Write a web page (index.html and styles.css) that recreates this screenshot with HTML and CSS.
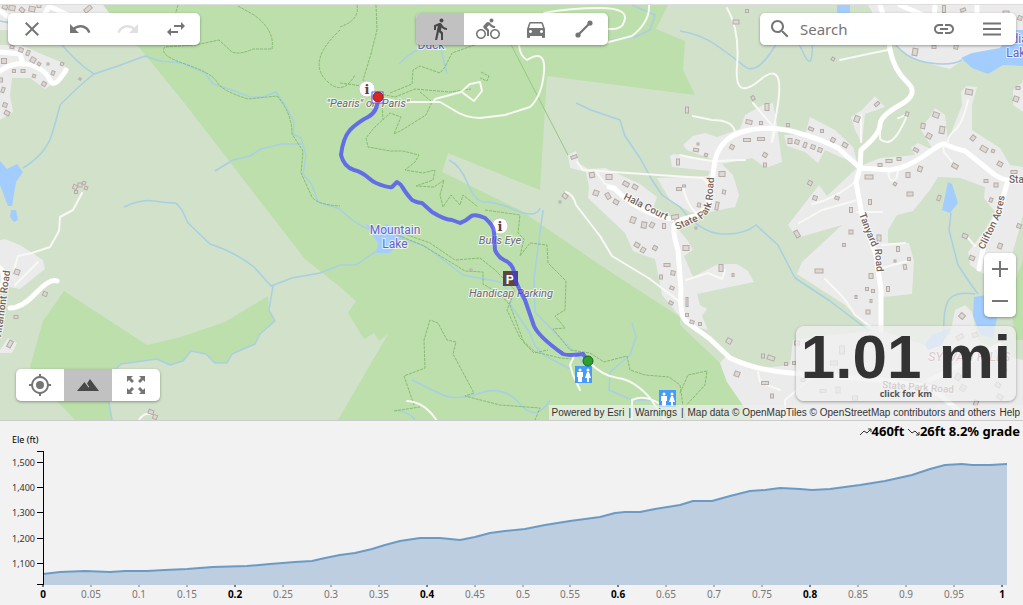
FILE: index.html
```
<!DOCTYPE html>
<html lang="en">
    <head>
        <meta charset="utf-8">
        <title>Route planner</title>
        <link rel="stylesheet" href="styles.css">
    </head>
    <body>
        <main class="map">
            <svg class="map-canvas" viewBox="0 5 1023 415" preserveAspectRatio="xMidYMid slice" aria-label="Route map">
                <rect class="land" y="5" width="1023" height="415"/>

                <!-- parks -->
                <g class="park">
                    <path d="M103 5L147 57 182 100 267 210 305 259 340 287 356 301 348 313 364 339 374 333 379 341 388 334 338 420H753L727 382 720 363 680 325V317L600 265 520 210 442 172 448 153 540 190 547 76 695 95 683 70 685 41 656 29 668 5Z"/>
                    <path d="M64 291L147 345 181 337 225 322 268 296 269 310 275 321 260 334 255 344 232 354 227 363 214 363 206 354 191 351 183 361 170 365 157 359 121 364 105 380 112 420H75L56 400 30 367 43 321Z"/>
                    <path d="M1023 260L1010 295 1015 340H1023ZM860 400L890 420H830Z"/>
                </g>

                <!-- residential areas -->
                <g class="urban">
                    <path d="M0 5H103L113 18 100 30H0Z"/>
                    <path d="M0 45H20L63 63 68 73 45 89 30 78H12L10 95 13 112 0 120Z"/>
                    <path d="M0 240L5 239 20 245 43 260 45 269 20 289 0 285ZM0 350L8 338 17 343 12 353H0Z"/>
                    <path d="M568 155L576 151 579 163 588 169 605 168 640 184 657 197 652 213 672 216 675 225 688 241 693 250 684 256 693 277 718 264 737 264 748 271 754 282 697 294 700 305 707 309 702 316 708 330 688 325 680 317 662 295 655 259 643 255 633 251 625 233 588 198 589 187 586 172 570 168Z"/>
                    <path d="M683 145L693 136 705 133 717 137 740 129 745 115 763 105 773 103 777 125 782 162 766 168 752 158 722 164 733 175 739 195 735 207 700 214 690 212 670 200 657 178 708 176 710 171 672 167 670 156 674 154 714 160 687 150Z"/>
                    <path d="M784 135L805 134 810 117 835 130 853 147 858 165 825 150 818 163 805 152 787 146Z"/>
                    <path d="M851 117L862 110 875 96 885 107 865 114 862 143 855 130Z"/>
                    <path d="M858 167L880 158 915 155 911 148 918 143 933 150 920 128 930 117 935 108 945 115 948 142 953 128 962 105 961 92 966 86 977 87 972 105 972 130 1000 148 1010 165 1023 167V215L1012 255 1005 285 985 275 970 265 968 252 985 230 995 212 984 198 985 187 960 178 938 177 930 190 913 211 897 215 888 230V243H909L914 261 912 294 883 297 882 330H870L845 305 797 274 802 262 842 225 797 238 788 225 819 185 827 196Z"/>
                    <path d="M727 355L765 368 790 365 793 340 815 337 880 330 925 345 950 335 955 310 965 305 972 312 978 340 1000 355 1023 360V420H753L727 382 720 363Z"/>
                    <path d="M868 5H1023V45L970 55 950 69 915 60 895 45 880 25ZM1013 90L1023 82V112L1013 105Z"/>
                </g>

                <!-- water -->
                <g class="water">
                    <path d="M0 161L7 169 17 164 23 172 16 182 12 206 8 206 0 185ZM11 210H16L18 220 14 222 10 217Z"/>
                    <path d="M365 223Q378 232 386 224L403 230 404 238 390 253H376L378 243 371 233Z"/>
                    <path d="M837 5H850V13H837ZM961 58L972 53 1000 48 1012 30H1023V66L1003 65 988 74 972 68Z"/>
                    <path d="M948 182L952 184 958 203 950 213 942 210ZM974 297L986 295 998 312 993 338 980 335 973 315ZM925 345L932 335 950 328 942 345 928 350Z"/>
                </g>
                <g class="stream">
                    <path d="M62 45Q78 64 94 74M23 168Q46 154 52 134T60 105Q82 83 94 74L118 66 145 56 160 61 182 63 205 73 213 84 232 90 250 97 262 97 276 92 285 105 294 122 293 134 301 138 306 155 303 174 312 185 318 202 340 209"/>
                    <path d="M215 171L233 160 250 156 261 149 281 144H302M124 207Q142 199 154 201T176 203L182 210 188 223 210 244Q235 252 254 267L271 286 292 278 320 273 340 265H356L378 250M273 286L269 310 275 321 260 334 255 344 232 354 227 363H215L206 354 191 351 183 361 170 365 157 359 121 364 105 380 112 420M340 209Q358 228 379 232M398 237L425 246 463 275 500 282 513 295 510 304 530 333 535 346 544 355 570 369M543 210L540 233 534 278 535 312 560 338 575 352 588 370M632 323L636 337 630 355 610 372 609 390 632 400 655 400M412 380Q430 389 443 395T480 393 520 404 550 400M395 410Q410 412 415 420"/>
                    <path d="M399 64Q414 48 428 47M440 45L447 74M632 5L655 15 650 30 635 37 610 40M576 103L591 110 620 120 625 136 640 158 652 180 662 195 680 207M680 31Q700 34 716 45T744 66 773 49 802 50 812 36M896 45Q908 60 930 63T962 60M680 207Q700 233 722 234T756 225L778 245 795 278 830 301 868 330M951 213L949 230 958 265 970 283 978 294M975 294Q950 290 946 306T945 338M449 160Q460 165 468 184T485 202 515 210 540 208M0 21L20 25"/>
                </g>

                <!-- trails -->
                <g class="trail">
                    <path d="M178 5L175 15M238 6L254 15Q275 30 272 49L253 49Q240 55 232 52L219 40 195 45 165 47Q158 55 185 64T217 82 248 99L277 96Q292 113 292 134L303 151 301 173 312 197Q318 205 340 206"/>
                    <path d="M340 30Q308 60 325 79T355 75M357 5Q360 20 340 27M376 5L377 30 371 54 363 80 370 92 395 97 415 89 450 92 471 89M390 93L412 84 413 70 420 66 440 73 445 67 452 53 480 43M481 72L489 76 487 81 480 78M420 92L432 102 426 115 402 130 394 134 401 117 390 113 374 128 366 138 368 147 390 151 403 151 419 155 415 162 405 170 423 173 435 170 433 180 416 186 434 187 444 180 440 195 443 207 451 195 460 205 463 195 478 207"/>
                    <path d="M399 232L430 243 455 260 480 258 495 270 515 290 507 310 520 338 535 352 560 358 572 359M380 228L422 245 452 263 465 271 483 272 483 284 500 294 510 305 524 343 534 353 548 350"/>
                    <path d="M485 210L520 215 518 233 524 239 520 256 530 243 547 245 548 263 566 281 565 310 555 316 565 328 553 329 570 350 590 353 604 362 627 356 630 370 645 375 669 377 680 385"/>
                    <path d="M414 405L404 376 425 368 424 340 430 320 438 323 447 340 456 342 453 354 474 393 465 396 500 405 540 408 535 420M394 411L420 407M370 90L362 86 340 83M382 106L383 120M680 385L685 420M680 393L688 375 707 371 705 385 682 410"/>
                </g>
                <path class="powerline" d="M505 33L568 155"/>

                <!-- minor roads -->
                <g class="road">
                    <path d="M386 99L400 102 440 102 452 109Q465 118 480 118L505 115 530 107Q542 96 544 72T527 60Q520 56 519 45M434 101L435 99 461 92 470 84 480 82 482 91 474 101 463 93M544 13Q570 8 600 8T624 22Q622 30 608 29M649 5Q650 22 632 36L605 43"/>
                    <path d="M727 8Q740 30 737 66T760 80 777 110 775 130M753 103L775 129M840 60L868 54 888 50M693 116L712 120Q734 120 735 133M680 155Q710 162 721 161T745 160M577 162L583 170 703 178 708 184M595 170L605 184 616 187M566 192Q573 194 576 205L600 236 612 256 650 279 680 302M683 187Q686 203 696 213"/>
                    <path d="M943 145L944 152 952 162M858 180Q833 200 812 204M857 200L822 210 799 223M888 171Q889 181 893 181T898 170M861 115V142M825 279L840 294Q846 300 855 315L870 326M882 268L908 261M857 212L882 212M686 280L708 273 722 279 725 270M882 245L905 243M815 335V375L785 400V420M758 372L760 382 780 390M880 127L880 139Q890 148 900 130T905 115 898 118M968 100Q963 123 955 130T948 142M968 238L975 246"/>
                    <path d="M73 210L60 217 59 231 50 247 32 253 18 256 14 270M38 262L15 285M73 210L82 193M139 420Q145 410 155 416M407 401Q425 402 437 421M588 361Q602 376 618 378T650 398L665 420M574 356L570 365 573 375 580 390M632 420V400Q645 394 660 404"/>
                </g>

                <!-- main roads -->
                <g class="road road-main">
                    <path d="M0 11L15 22M0 52L20 54 23 64M0 71Q16 60 31 65T50 80 66 70M50 5L40 22M53 8Q75 18 90 26M0 268Q8 277 0 290M10 308Q22 308 36 293T57 281"/>
                    <path d="M609 187L615 189Q640 214 672 219M880 5L888 30 890 50Q894 70 907 82T900 105 880 125 861 150L860 168M675 225L680 220 695 216 707 208 711 190 715 160Q721 137 745 131T795 132 838 148L860 168 890 170Q907 168 925 155T945 144 965 151L995 175Q1003 180 1008 180L1023 181M1008 180L1000 210 985 240 979 269M860 168L856 182 862 215 876 255 881 290V330"/>
                    <path d="M674 225Q673 235 678 250L681 290Q679 317 688 323L710 339 730 358Q755 370 790 373L880 380 930 387 970 420M935 5L934 20 900 5M977 5V20M930 380L1000 345"/>
                </g>

                <g id="buildings"></g>

                <!-- labels -->
                <text class="label label-water" x="395" y="234">Mountain</text>
                <text class="label label-water" x="395" y="248">Lake</text>
                <text class="label label-water" x="431" y="49">Duck</text>
                <text class="label label-water" x="1018" y="43">Indian</text>
                <text class="label label-water" x="1019" y="57">Lake</text>
                <text class="label label-poi" x="368" y="107">"Pearis" or "Paris"</text>
                <text class="label label-poi" x="500" y="244">Bulls Eye</text>
                <text class="label label-poi" x="511" y="297">Handicap Parking</text>
                <path id="hala" class="guide" d="M623 199L668 221"/>
                <path id="statepark" class="guide" d="M677 230L700 220Q713 213 713 192L715 165"/>
                <path id="tanyard" class="guide" d="M859 214Q869 242 875 252L878 290"/>
                <path id="clifton" class="guide" d="M984 250L1001 215 1008 180"/>
                <path id="altamont" class="guide" d="M1 337L10 272"/>
                <g class="label label-road">
                    <text><textPath href="#hala">Hala Court</textPath></text>
                    <text><textPath href="#statepark">State Park Road</textPath></text>
                    <text><textPath href="#tanyard">Tanyard Road</textPath></text>
                    <text><textPath href="#clifton">Clifton Acres</textPath></text>
                    <text><textPath href="#altamont">Altamont Road</textPath></text>
                    <text x="1009" y="183">State</text>
                    <text x="882" y="388" transform="rotate(4 882 388)">State Park Road</text>
                </g>
                <text class="label label-place" x="928" y="361">SYLVAN HILLS</text>

                <!-- points of interest -->
                <g class="poi-info">
                    <circle cx="367" cy="89" r="8"/>
                    <text x="367" y="94">i</text>
                    <circle cx="500" cy="226" r="8"/>
                    <text x="500" y="231">i</text>
                </g>
                <g class="poi-parking">
                    <rect x="503" y="271" width="15" height="15"/>
                    <text x="510" y="284">P</text>
                </g>
                <g class="poi-restroom">
                    <g id="restroom">
                        <rect x="575" y="366" width="17" height="17"/>
                        <path d="M577 372H583V377H582V382H578V377H577ZM587 372H589L591 378H589V382H587V378H585Z"/>
                        <circle cx="580" cy="370" r="1.5"/>
                        <circle cx="588" cy="370" r="1.5"/>
                    </g>
                    <use href="#restroom" x="84" y="24"/>
                </g>

                <!-- route -->
                <path class="route" d="M378 97Q378 112 368 117T350 130Q343 138 341 155 344 167 354 170C367 173 368 180 376 183Q388 188 392 187L397 182Q401 184 403 188T412 200Q418 203 422 203L432 212Q445 220 452 220L460 223Q466 221 470 217T485 218Q494 226 494 232L495 250Q498 257 504 260 514 264 515 277 516 284 525 300L534 326Q539 337 563 354 568 356 583 354L588 361"/>
                <rect class="snap" x="372" y="92" width="11" height="11"/>
                <circle class="end" cx="378" cy="97" r="5"/>
                <circle class="start" cx="588" cy="361" r="5"/>
            </svg>

            <div class="overlay">
                <div class="topbar">
                    <div class="toolbar">
                        <button type="button" aria-label="Clear">
                            <svg class="icon" viewBox="0 0 24 24"><path d="M19 6.4L17.6 5 12 10.6 6.4 5 5 6.4 10.6 12 5 17.6 6.4 19 12 13.4 17.6 19 19 17.6 13.4 12z"/></svg>
                        </button>
                        <button type="button" aria-label="Undo">
                            <svg class="icon" viewBox="0 0 24 24"><path d="M12.5 8c-2.65 0-5.05.99-6.9 2.6L2 7v9h9l-3.62-3.62c1.39-1.16 3.16-1.88 5.12-1.88 3.54 0 6.55 2.31 7.6 5.5l2.37-.78C21.08 11.03 17.15 8 12.5 8z"/></svg>
                        </button>
                        <button type="button" aria-label="Redo" disabled>
                            <svg class="icon" viewBox="0 0 24 24"><path d="M18.4 10.6C16.55 8.99 14.15 8 11.5 8c-4.65 0-8.58 3.03-9.96 7.22L3.9 16c1.05-3.19 4.05-5.5 7.6-5.5 1.95 0 3.73.72 5.12 1.88L13 16h9V7l-3.6 3.6z"/></svg>
                        </button>
                        <button type="button" aria-label="Reverse route">
                            <svg class="icon" viewBox="0 0 24 24"><path d="M6.99 11L3 15l3.99 4v-3H14v-2H6.99v-3zM21 9l-3.99-4v3H10v2h7.01v3L21 9z"/></svg>
                        </button>
                    </div>

                    <div class="toolbar">
                        <button type="button" class="active" aria-label="Walk">
                            <svg class="icon" viewBox="0 0 24 24"><path d="M13.5 5.5c1.1 0 2-.9 2-2s-.9-2-2-2-2 .9-2 2 .9 2 2 2zM9.8 8.9L7 23h2.1l1.8-8 2.1 2v6h2v-7.5l-2.1-2 .6-3C14.8 12 16.8 13 19 13v-2c-1.9 0-3.5-1-4.3-2.4l-1-1.6c-.4-.6-1-1-1.7-1-.3 0-.5.1-.8.1L6 8.3V13h2V9.6l1.8-.7"/></svg>
                        </button>
                        <button type="button" aria-label="Bike">
                            <svg class="icon" viewBox="0 0 24 24"><path d="M15.5 5.5c1.1 0 2-.9 2-2s-.9-2-2-2-2 .9-2 2 .9 2 2 2zM5 12c-2.8 0-5 2.2-5 5s2.2 5 5 5 5-2.2 5-5-2.2-5-5-5zm0 8.5c-1.9 0-3.5-1.6-3.5-3.5s1.6-3.5 3.5-3.5 3.5 1.6 3.5 3.5-1.6 3.5-3.5 3.5zm5.8-10l2.4-2.4.8.8c1.3 1.3 3 2.1 5.1 2.1V9c-1.5 0-2.7-.6-3.6-1.5l-1.9-1.9c-.5-.4-1-.6-1.6-.6s-1.1.2-1.4.6L7.8 8.4c-.4.4-.6.9-.6 1.4 0 .6.2 1.1.6 1.4L11 14v5h2v-6.2l-2.2-2.3zM19 12c-2.8 0-5 2.2-5 5s2.2 5 5 5 5-2.2 5-5-2.2-5-5-5zm0 8.5c-1.9 0-3.5-1.6-3.5-3.5s1.6-3.5 3.5-3.5 3.5 1.6 3.5 3.5-1.6 3.5-3.5 3.5z"/></svg>
                        </button>
                        <button type="button" aria-label="Drive">
                            <svg class="icon" viewBox="0 0 24 24"><path d="M18.92 6.01C18.72 5.42 18.16 5 17.5 5h-11c-.66 0-1.21.42-1.42 1.01L3 12v8c0 .55.45 1 1 1h1c.55 0 1-.45 1-1v-1h12v1c0 .55.45 1 1 1h1c.55 0 1-.45 1-1v-8l-2.08-5.99zM6.5 16c-.83 0-1.5-.67-1.5-1.5S5.67 13 6.5 13s1.5.67 1.5 1.5S7.33 16 6.5 16zm11 0c-.83 0-1.5-.67-1.5-1.5s.67-1.5 1.5-1.5 1.5.67 1.5 1.5-.67 1.5-1.5 1.5zM5 11l1.5-4.5h11L19 11H5z"/></svg>
                        </button>
                        <button type="button" aria-label="Straight line">
                            <svg class="icon" viewBox="0 0 24 24"><circle cx="6" cy="18" r="2.6"/><circle cx="18" cy="6" r="2.6"/><path d="M5.2 17.2l12-12 1.6 1.6-12 12z"/></svg>
                        </button>
                    </div>

                    <form class="search">
                        <button type="submit" aria-label="Search">
                            <svg class="icon" viewBox="0 0 24 24"><path d="M15.5 14h-.79l-.28-.27C15.41 12.59 16 11.11 16 9.5 16 5.91 13.09 3 9.5 3S3 5.91 3 9.5 5.91 16 9.5 16c1.61 0 3.09-.59 4.23-1.57l.27.28v.79l5 4.99L20.49 19l-4.99-5zm-6 0C7.01 14 5 11.99 5 9.5S7.01 5 9.5 5 14 7.01 14 9.5 11.99 14 9.5 14z"/></svg>
                        </button>
                        <input type="text" placeholder="Search" aria-label="Search places">
                        <button type="button" aria-label="Copy link">
                            <svg class="icon" viewBox="0 0 24 24"><path d="M3.9 12c0-1.71 1.39-3.1 3.1-3.1h4V7H7c-2.76 0-5 2.24-5 5s2.24 5 5 5h4v-1.9H7c-1.71 0-3.1-1.39-3.1-3.1zM8 13h8v-2H8v2zm9-6h-4v1.9h4c1.71 0 3.1 1.39 3.1 3.1s-1.39 3.1-3.1 3.1h-4V17h4c2.76 0 5-2.24 5-5s-2.24-5-5-5z"/></svg>
                        </button>
                        <button type="button" aria-label="Menu">
                            <svg class="icon" viewBox="0 0 24 24"><path d="M3 18.5h18v-2H3v2zm0-5.5h18v-2H3v2zm0-7.5v2h18v-2H3z"/></svg>
                        </button>
                    </form>
                </div>

                <div class="bottom">
                    <div class="bottombar">
                        <div class="toolbar">
                            <button type="button" aria-label="My location">
                                <svg class="icon" viewBox="0 0 24 24"><circle cx="12" cy="12" r="4"/><path d="M11 1h2v2.1a9 9 0 0 1 7.9 7.9H23v2h-2.1a9 9 0 0 1-7.9 7.9V23h-2v-2.1A9 9 0 0 1 3.1 13H1v-2h2.1A9 9 0 0 1 11 3.1zM12 5a7 7 0 1 0 0 14 7 7 0 0 0 0-14z"/></svg>
                            </button>
                            <button type="button" class="active" aria-label="Elevation profile">
                                <svg class="icon" viewBox="0 0 24 24"><path d="M1 18L8.5 9l2.500 3.500 1.500 2 .8-.6L11 10.500 14 6l9 12z"/></svg>
                            </button>
                            <button type="button" aria-label="Full screen">
                                <svg class="icon" viewBox="0 0 24 24"><path d="M3 3h6L7 5l3 3-2 2-3-3-2 2zM21 3v6l-2-2-3 3-2-2 3-3-2-2zM3 21v-6l2 2 3-3 2 2-3 3 2 2zM21 21h-6l2-2-3-3 2-2 3 3 2-2z"/></svg>
                            </button>
                        </div>

                        <div class="right">
                            <div class="zoom">
                                <button type="button" aria-label="Zoom in">
                                    <svg class="icon" viewBox="0 0 24 24"><path d="M11 4h2v7h7v2h-7v7h-2v-7H4v-2h7z"/></svg>
                                </button>
                                <button type="button" aria-label="Zoom out">
                                    <svg class="icon" viewBox="0 0 24 24"><path d="M4 11h16v2H4z"/></svg>
                                </button>
                            </div>
                            <button type="button" class="distance">
                                <span class="distance-value">1.01 mi</span>
                                <span class="distance-hint">click for km</span>
                            </button>
                        </div>
                    </div>

                    <div class="attribution">
                        <span>Powered by <a href="#">Esri</a></span>
                        <span>|</span>
                        <a href="#">Warnings</a>
                        <span>|</span>
                        <span>Map data © <a href="#">OpenMapTiles</a> © <a href="#">OpenStreetMap</a> contributors and others</span>
                        <a href="#" class="help">Help</a>
                    </div>
                </div>
            </div>
        </main>

        <section class="elevation">
            <div class="elevation-header">
                <span class="elevation-unit">Ele (ft)</span>
                <div class="stats">
                    <svg class="trend" viewBox="0 0 12 8"><path d="M0 7L4 3 7 5 11 1M8 1H11V4"/></svg>460ft
                    <svg class="trend" viewBox="0 0 12 8"><path d="M0 1L4 5 7 3 11 7M8 7H11V4"/></svg>26ft 8.2% grade
                </div>
            </div>
            <svg class="chart" viewBox="0 0 1023 160" aria-label="Elevation profile">
                <path id="area" class="area"/>
                <path id="line" class="line"/>
                <path class="axis" d="M37 6H43V139H37"/>
                <g id="yticks"></g>
                <g id="xticks"></g>
            </svg>
        </section>

        <script>
            var SVG_NS = 'http://www.w3.org/2000/svg';

            // x, y, width, height, rotation
            var buildings = [
                [5, 7, 5, 4, 20], [12, 8, 6, 5, 10], [22, 10, 5, 4, 40], [32, 9, 6, 5, 10], [39, 6, 4, 3, 0], [88, 9, 8, 4, -40],
                [12, 47, 4, 3, 10], [21, 50, 4, 4, 20], [28, 53, 3, 5, 20], [33, 60, 5, 5, 30], [39, 64, 3, 3, 30], [48, 64, 2, 2, 0],
                [62, 64, 3, 3, 20], [4, 61, 5, 5, 0], [14, 71, 3, 3, 0], [23, 71, 4, 3, 0], [34, 76, 3, 3, 20], [53, 73, 3, 4, 20],
                [44, 84, 4, 4, 30], [1, 80, 3, 4, 0], [3, 90, 3, 5, 20], [5, 105, 4, 4, 20], [7, 113, 5, 4, 30], [80, 79, 2, 2, 30],
                [75, 187, 4, 4, 20], [80, 185, 4, 4, 0], [84, 183, 3, 3, 20], [86, 188, 3, 3, 20], [76, 192, 3, 3, 0],
                [17, 272, 5, 5, 20], [45, 294, 4, 4, 20], [16, 317, 4, 3, 0], [10, 344, 4, 7, 30], [151, 412, 5, 4, 20], [155, 417, 4, 4, 20],
                [574, 157, 6, 3, -20], [592, 175, 5, 5, -10], [609, 177, 6, 5, 0], [626, 184, 6, 4, 30], [635, 187, 5, 4, 30],
                [596, 193, 5, 5, 20], [608, 196, 4, 6, -30], [616, 202, 5, 4, 30], [565, 196, 5, 4, 40], [560, 202, 2, 2, 0],
                [633, 220, 5, 6, 20], [644, 225, 5, 6, 10], [652, 225, 4, 5, 30], [664, 226, 3, 5, 0], [675, 217, 7, 4, -10],
                [637, 245, 5, 4, 30], [643, 250, 4, 5, 30], [655, 248, 4, 4, 30], [667, 265, 6, 3, 0], [673, 273, 4, 4, 10],
                [661, 277, 3, 4, 0], [672, 288, 4, 3, 20], [671, 303, 4, 3, 30], [678, 162, 3, 6, 0], [679, 189, 5, 3, 0], [684, 186, 3, 2, 0],
                [699, 205, 3, 4, 10], [717, 206, 3, 8, 10], [696, 228, 2, 2, 0],
                [687, 110, 3, 6, 0], [753, 98, 3, 4, -30], [767, 107, 4, 7, 0], [749, 122, 6, 4, 10], [761, 123, 3, 3, 0], [788, 125, 3, 3, 0],
                [747, 140, 7, 3, 0], [761, 139, 7, 3, 0], [765, 155, 4, 4, 30], [765, 165, 3, 4, 0], [698, 144, 2, 2, 0], [696, 150, 5, 3, 10],
                [706, 155, 3, 3, 20], [732, 147, 4, 4, 30], [722, 174, 6, 5, 0], [724, 192, 3, 4, 10], [736, 22, 6, 4, 0], [747, 11, 3, 3, 0],
                [811, 129, 5, 3, 20], [822, 131, 3, 3, 0], [833, 140, 4, 4, 30], [845, 145, 5, 4, 30], [790, 141, 4, 5, 0], [797, 142, 4, 4, 20],
                [805, 145, 3, 5, 20], [813, 147, 4, 4, 20], [820, 150, 4, 4, 20], [833, 59, 3, 3, 30], [857, 119, 5, 6, 20], [877, 104, 5, 3, -40],
                [907, 114, 3, 4, 20], [915, 52, 5, 7, 10], [934, 47, 4, 3, 0], [956, 47, 4, 4, 10], [969, 92, 7, 5, 10], [936, 115, 6, 5, 20],
                [923, 126, 4, 5, 10], [929, 136, 5, 5, 30], [942, 130, 5, 7, 10], [916, 150, 5, 3, 30], [973, 138, 4, 5, 40], [984, 149, 7, 5, 30],
                [993, 151, 3, 3, 20], [1000, 164, 5, 4, 30], [1014, 172, 6, 3, 0], [880, 165, 4, 3, 0], [889, 161, 6, 3, 0], [899, 159, 4, 3, 0],
                [869, 177, 8, 4, 0], [895, 184, 3, 3, 30], [908, 175, 4, 5, 0], [920, 169, 4, 5, 20], [910, 194, 6, 4, 0], [955, 166, 6, 4, 30],
                [986, 181, 4, 3, 0], [996, 185, 4, 4, 0], [939, 198, 3, 5, 20], [815, 198, 4, 4, 20], [837, 198, 4, 3, 20], [870, 202, 3, 5, 0],
                [810, 183, 4, 4, 30], [797, 234, 4, 7, -30], [844, 245, 3, 3, 0], [851, 232, 4, 4, 0], [819, 271, 8, 4, 0], [879, 238, 4, 6, 0],
                [851, 210, 3, 5, 0], [991, 200, 3, 4, 20],
                [898, 249, 3, 5, 0], [895, 261, 2, 2, 0], [905, 267, 3, 5, -10], [909, 259, 3, 3, 0], [871, 276, 4, 5, 0], [888, 289, 3, 5, 0],
                [867, 289, 3, 3, 0], [873, 291, 3, 3, 0], [856, 297, 2, 3, 0], [871, 301, 2, 3, 0], [868, 312, 4, 4, 0], [965, 236, 5, 4, 20],
                [1000, 246, 4, 5, 20], [972, 258, 5, 4, 20], [1019, 226, 4, 4, 20], [721, 268, 4, 7, 0], [733, 275, 2, 3, 0], [686, 248, 6, 5, 0],
                [687, 302, 2, 9, 0], [687, 315, 3, 3, 0], [692, 322, 4, 3, 20], [700, 324, 3, 3, 0], [729, 341, 5, 5, 30], [763, 356, 3, 4, 0],
                [771, 358, 7, 4, 20], [786, 364, 3, 3, 0], [794, 363, 3, 3, 0], [737, 374, 5, 5, 20], [765, 383, 7, 3, 0], [772, 396, 3, 4, 0],
                [962, 316, 5, 5, 40], [842, 350, 5, 8, 0], [834, 363, 7, 4, 0], [797, 343, 5, 4, 0], [803, 380, 4, 3, 0], [823, 391, 6, 3, 0],
                [838, 390, 4, 6, 0], [855, 398, 5, 4, 0], [960, 337, 7, 4, -30], [975, 335, 5, 4, -20], [958, 377, 5, 6, 30], [963, 388, 5, 6, 30],
                [1004, 370, 5, 4, 30], [998, 385, 5, 4, 30], [1000, 397, 6, 4, 30], [976, 403, 4, 5, 20], [471, 270, 2, 2, 0], [1018, 88, 4, 3, 0],
                [1016, 99, 5, 5, 20], [944, 9, 3, 7, 0], [963, 10, 5, 3, -20], [1006, 13, 6, 4, 0], [1020, 18, 4, 4, 20]
            ];

            // chart pixels, top left is 0,0
            var profile = [
                [43, 129], [60, 127], [85, 126], [110, 127], [125, 126], [147, 126], [165, 125], [187, 124], [213, 122], [247, 121],
                [270, 119], [295, 117], [312, 116], [325, 113], [340, 110], [355, 108], [372, 104], [385, 100], [400, 96], [420, 93],
                [440, 93], [460, 95], [475, 92], [490, 88], [505, 86], [525, 84], [545, 80], [570, 76], [600, 72], [615, 68], [625, 67],
                [640, 67], [655, 64], [680, 60], [693, 56], [712, 56], [730, 51], [750, 46], [765, 45], [780, 43], [800, 44], [812, 45],
                [830, 44], [860, 40], [885, 36], [912, 30], [930, 24], [945, 20], [962, 19], [972, 20], [990, 20], [1007, 19]
            ];

            function add (parent, name, attrs, text) {
                var el = document.createElementNS(SVG_NS, name);

                for (var key in attrs) {
                    el.setAttribute(key, attrs[key]);
                }

                if (text) {
                    el.textContent = text;
                }

                parent.appendChild(el);
            }

            var buildingsEl = document.getElementById('buildings'),
                xTicks = document.getElementById('xticks'),
                yTicks = document.getElementById('yticks');

            buildings.forEach(function (b) {
                add(buildingsEl, 'rect', {
                    x: b[0] - b[2] / 2,
                    y: b[1] - b[3] / 2,
                    width: b[2],
                    height: b[3],
                    transform: 'rotate(' + b[4] + ' ' + b[0] + ' ' + b[1] + ')'
                });
            });

            var linePath = 'M' + profile.join('L');
            document.getElementById('line').setAttribute('d', linePath);
            document.getElementById('area').setAttribute('d', linePath + 'V140H43Z');

            for (var i = 0; i <= 20; i++) {
                var x = Math.round(43 + i * 47.95),
                    major = i % 4 === 0;

                add(xTicks, 'path', {d: 'M' + x + ' 140v2', class: major ? 'tick major' : 'tick'});
                add(xTicks, 'text', {x: x, y: 153, class: major ? 'major' : ''}, String(i / 20));
            }

            for (var j = 0; j < 5; j++) {
                var y = Math.round(17 + j * 25.2);

                add(yTicks, 'path', {d: 'M37 ' + y + 'h6', class: 'axis'});
                add(yTicks, 'text', {x: 35, y: y + 4}, '1,' + (5 - j) + '00');
            }
        </script>
    </body>
</html>
```
FILE: styles.css
```
html {
    height:100%;
}

body {
    margin:0;
    padding:4px 0 0 0;
    min-height:100%;
    box-sizing:border-box;
    display:flex;
    flex-direction:column;
    background:#fff;
    font-family:"Noto Sans", "Open Sans", sans-serif;
}

button {
    border:0;
    padding:0;
    background:none;
    font-family:inherit;
    cursor:pointer;
}

a {
    color:inherit;
    text-decoration:none;
}

/* map */

.map {
    position:relative;
    flex:1;
    min-height:360px;
    overflow:hidden;
    border-top:1px solid #ddd;
    border-bottom:1px solid #ccc;
}

.map-canvas {
    position:absolute;
    width:100%;
    height:100%;
}

.land {
    fill:#d1e1ca;
}

.park {
    fill:#bddfac;
}

.urban {
    fill:#ebebeb;
}

.water {
    fill:#a3cdff;
}

.stream {
    fill:none;
    stroke:#a9cfe2;
    stroke-width:1.5;
    stroke-linejoin:round;
}

.trail {
    fill:none;
    stroke:#86bb70;
    stroke-width:1;
    stroke-dasharray:3 1;
    stroke-linejoin:round;
}

.powerline {
    stroke:#98c785;
}

.road {
    fill:none;
    stroke:#f8f8f5;
    stroke-width:2;
    stroke-linecap:round;
    stroke-linejoin:round;
}

.road-main {
    stroke:#fff;
    stroke-width:5;
}

#buildings {
    fill:#ddd8d4;
    stroke:#b5aca7;
}

.guide {
    fill:none;
}

.label {
    font-family:Roboto, sans-serif;
    paint-order:stroke;
    stroke:rgba(255,255,255,0.7);
    stroke-width:2px;
}

.label-water {
    fill:#6464c8;
    font-size:12px;
    text-anchor:middle;
}

.label-poi {
    fill:#6c6877;
    font-size:11px;
    font-style:italic;
    text-anchor:middle;
}

.label-road {
    fill:#73635c;
    font-size:10px;
    font-weight:500;
}

.label-place {
    fill:#a05070;
    font-size:13px;
    font-style:italic;
}

.poi-info circle {
    fill:#fff;
    stroke:#ccc;
}

.poi-info text {
    fill:#5c4038;
    font:bold 13px "DejaVu Serif", serif;
    text-anchor:middle;
}

.poi-parking rect {
    fill:#5d4540;
}

.poi-parking text {
    fill:#fff;
    font:bold 13px Roboto, sans-serif;
    text-anchor:middle;
}

.poi-restroom {
    fill:#fff;
}

.poi-restroom rect {
    fill:#459bf7;
}

.route {
    fill:none;
    stroke:#3d3dff;
    stroke-opacity:0.7;
    stroke-width:4;
    stroke-linejoin:round;
    stroke-linecap:round;
}

.snap {
    fill:#fff;
    stroke:#5555ee;
}

.end {
    fill:#d62626;
    stroke:#822;
}

.start {
    fill:#2ca02c;
    stroke:#1c641c;
}

/* controls */

.overlay {
    position:absolute;
    top:0;
    right:0;
    bottom:0;
    left:0;
    display:flex;
    flex-direction:column;
    justify-content:space-between;
}

.topbar {
    display:grid;
    grid-template-columns:1fr auto 1fr;
    padding:8px 7px 0 8px;
}

.toolbar,
.search,
.zoom {
    display:flex;
    justify-self:start;
    overflow:hidden;
    background:#fff;
    border-radius:5px;
    box-shadow:0 1px 3px rgba(0,0,0,0.35);
}

.toolbar button,
.search button {
    width:48px;
    height:32px;
}

.icon {
    display:block;
    width:24px;
    height:24px;
    margin:0 auto;
    fill:#757575;
    fill-rule:evenodd;
}

button:disabled .icon {
    fill:#e0e0e0;
}

.toolbar .active {
    background:#c1c1c1;
}

.active .icon {
    fill:#484848;
}

.search {
    width:256px;
    justify-self:end;
}

.search button:first-child {
    width:40px;
}

.search input {
    flex:1;
    min-width:0;
    border:0;
    padding:0;
    outline:0;
    font-family:inherit;
    font-size:15px;
    color:#333;
}

.search input::placeholder {
    color:#757575;
}

.bottombar {
    display:flex;
    justify-content:space-between;
    align-items:flex-end;
    padding:0 7px 4px 16px;
}

.right {
    display:flex;
    flex-direction:column;
    align-items:flex-end;
    gap:9px;
}

.zoom {
    flex-direction:column;
    width:32px;
}

.zoom button {
    height:32px;
}

.distance {
    padding:0 5px 2px 5px;
    background:rgba(240,240,240,0.75);
    border-radius:8px;
    box-shadow:0 1px 3px rgba(0,0,0,0.35);
    color:#333;
}

.distance-value {
    display:block;
    font:bold 62px/62px "Liberation Sans", Arial, sans-serif;
}

.distance-hint {
    display:block;
    font-size:9px;
    line-height:11px;
    font-weight:bold;
    color:#555;
}

.attribution {
    display:flex;
    gap:4px;
    width:fit-content;
    box-sizing:border-box;
    margin-left:auto;
    padding:0 3px;
    background:rgba(240,240,240,0.7);
    color:#333;
    font:10px/15px "Liberation Sans", Arial, sans-serif;
}

/* elevation */

.elevation {
    background:#f2f2f2;
}

.elevation-header {
    display:flex;
    justify-content:space-between;
    height:24px;
    padding:0 3px 0 12px;
}

.elevation-unit {
    align-self:flex-end;
    font-size:9px;
    line-height:10px;
}

.stats {
    font-size:13px;
    line-height:20px;
    font-weight:bold;
}

.trend {
    width:12px;
    height:8px;
    fill:none;
    stroke:#333;
}

.chart {
    display:block;
    width:100%;
    font-size:10px;
}

.area {
    fill:#bdcee0;
}

.line {
    fill:none;
    stroke:#6b9bc5;
    stroke-width:2;
    stroke-linejoin:round;
}

.axis {
    fill:none;
    stroke:#000;
    shape-rendering:crispEdges;
}

.tick {
    stroke:#777;
}

#xticks text {
    fill:#777;
    text-anchor:middle;
}

#xticks .major {
    fill:#000;
    stroke:#000;
}

#xticks text.major {
    stroke:none;
    font-weight:bold;
}

#yticks text {
    fill:#333;
    font-size:9px;
    text-anchor:end;
}
```
